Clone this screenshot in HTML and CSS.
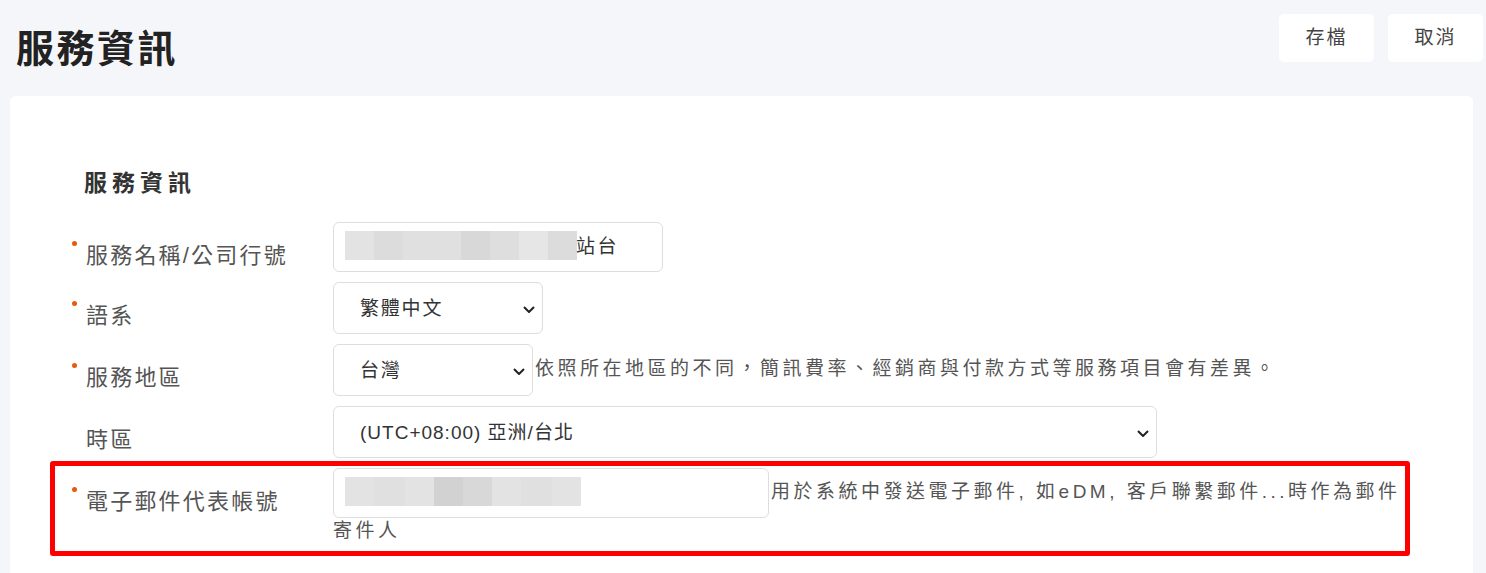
FILE: index.html
```html
<!DOCTYPE html>
<html lang="zh-Hant">
<head>
  <meta charset="UTF-8">
  <meta name="viewport" content="width=device-width, initial-scale=1.0">
  <title>服務資訊</title>
  <link rel="stylesheet" href="styles.css">
</head>
<body>
  <div class="header">
    <h1 class="page-title">服務資訊</h1>
    <div class="actions">
      <button class="btn" type="button">存檔</button>
      <button class="btn" type="button">取消</button>
    </div>
  </div>

  <div class="card">
    <div class="section-title">服務資訊</div>

    <div class="form-row">
      <div class="form-label required">服務名稱/公司行號</div>
      <div class="form-field">
        <div class="text-input name-input"><span class="redacted"><i class="r1"></i><i class="r2"></i><i class="r3"></i><i class="r4"></i><i class="r5"></i><i class="r6"></i><i class="r2"></i></span>站台</div>
      </div>
    </div>

    <div class="form-row">
      <div class="form-label required">語系</div>
      <div class="form-field">
        <div class="select lang-select">
          <select>
            <option>繁體中文</option>
          </select>
          <svg class="chevron" viewBox="0 0 12 7"><path d="M1 1l5 5 5-5"/></svg>
        </div>
      </div>
    </div>

    <div class="form-row">
      <div class="form-label required">服務地區</div>
      <div class="form-field">
        <div class="select region-select">
          <select>
            <option>台灣</option>
          </select>
          <svg class="chevron" viewBox="0 0 12 7"><path d="M1 1l5 5 5-5"/></svg>
        </div><span class="help">依照所在地區的不同，簡訊費率、經銷商與付款方式等服務項目會有差異。</span>
      </div>
    </div>

    <div class="form-row">
      <div class="form-label">時區</div>
      <div class="form-field">
        <div class="select tz-select">
          <select>
            <option>(UTC+08:00) 亞洲/台北</option>
          </select>
          <svg class="chevron" viewBox="0 0 12 7"><path d="M1 1l5 5 5-5"/></svg>
        </div>
      </div>
    </div>

    <div class="form-row highlight">
      <div class="form-label required">電子郵件代表帳號</div>
      <div class="form-field">
        <div class="text-input email-input"><span class="redacted"><i class="r1"></i><i class="r3"></i><i class="r1"></i><i class="r7"></i><i class="r4"></i><i class="r1"></i><i class="r3"></i><i class="r1"></i></span></div><span class="help">用於系統中發送電子郵件, 如eDM, 客戶聯繫郵件...時作為郵件寄件人</span>
      </div>
    </div>
  </div>
</body>
</html>
```

FILE: styles.css
```css
body {
  margin: 0;
  background-color: #f5f6fa;
  font-family: "Liberation Sans", "Noto Sans CJK TC", Arial, sans-serif;
  color: #333;
  overflow: hidden;
}

.header {
  display: flex;
  justify-content: space-between;
  align-items: flex-start;
  padding: 14px 3px 0 16px;
}

.page-title {
  margin: 12px 0 0;
  font-size: 38px;
  line-height: 46px;
  letter-spacing: 2.5px;
  font-weight: bold;
  color: #222;
}

.actions {
  display: flex;
  gap: 14px;
}

.btn {
  width: 95px;
  height: 48px;
  padding: 0 0 5px;
  background-color: #fff;
  border: none;
  border-radius: 5px;
  font-family: inherit;
  font-size: 19px;
  letter-spacing: 2px;
  color: #444;
  cursor: pointer;
}

.card {
  margin: 24px 13px 0 10px;
  padding: 72px 60px 40px;
  min-height: 600px;
  background-color: #fff;
  border-radius: 6px;
}

.section-title {
  margin: 0 0 24px 14px;
  font-size: 23px;
  line-height: 30px;
  font-weight: bold;
  letter-spacing: 5px;
  color: #333;
}

.form-row {
  display: flex;
  margin-bottom: 10px;
}

.form-label {
  display: flex;
  flex-shrink: 0;
  width: 247px;
  padding: 19px 0 0 16px;
  font-size: 22px;
  line-height: 30px;
  letter-spacing: 2.2px;
  color: #555;
}

.required::before {
  content: "";
  flex-shrink: 0;
  width: 5px;
  height: 5px;
  margin: 0 9px 0 -14px;
  border-radius: 50%;
  background-color: #e8590c;
}

.form-field {
  width: 1072px;
  font-size: 19px;
  line-height: 26px;
  letter-spacing: 3.5px;
  color: #555;
}

.help {
  margin-left: 2px;
}

.text-input {
  display: inline-block;
  vertical-align: middle;
  box-sizing: border-box;
  height: 50px;
  padding: 0 11px;
  border: 1px solid #ddd;
  border-radius: 6px;
  font-size: 19px;
  line-height: 48px;
  letter-spacing: 2.5px;
  color: #333;
  white-space: nowrap;
}

.name-input {
  width: 330px;
}

.email-input {
  width: 436px;
}

.redacted {
  display: inline-flex;
  vertical-align: middle;
  height: 29px;
  margin-top: -4px;
  margin-right: -1px;
}

.redacted i {
  width: 29px;
  height: 100%;
}

.redacted .r1 { background-color: #e3e3e3; }
.redacted .r2 { background-color: #dcdcdc; }
.redacted .r3 { background-color: #e0e0e0; width: 58px; }
.redacted .r4 { background-color: #d8d8d8; }
.redacted .r5 { background-color: #dedede; }
.redacted .r6 { background-color: #e6e6e6; }
.redacted .r7 { background-color: #d2d2d2; }

.email-input .redacted .r3 { width: 31px; }

.select {
  position: relative;
  display: inline-block;
  vertical-align: middle;
}

.select select {
  display: block;
  box-sizing: border-box;
  height: 52px;
  padding: 0 40px 0 26px;
  border: 1px solid #ddd;
  border-radius: 6px;
  background-color: #fff;
  appearance: none;
  font-family: inherit;
  font-size: 19px;
  letter-spacing: 1.8px;
  color: #333;
}

.lang-select select { width: 210px; }
.region-select select { width: 200px; }
.tz-select select { width: 824px; letter-spacing: 1px; }

.chevron {
  position: absolute;
  right: 8px;
  top: 50%;
  width: 12px;
  height: 7px;
  margin-top: -2px;
  fill: none;
  stroke: #222;
  stroke-width: 2;
  pointer-events: none;
}

.highlight {
  position: relative;
}

.highlight::after {
  content: "";
  position: absolute;
  left: -20px;
  top: -7px;
  right: 3px;
  bottom: -12px;
  border: 5px solid #f00;
  border-radius: 3px;
  pointer-events: none;
}
```
